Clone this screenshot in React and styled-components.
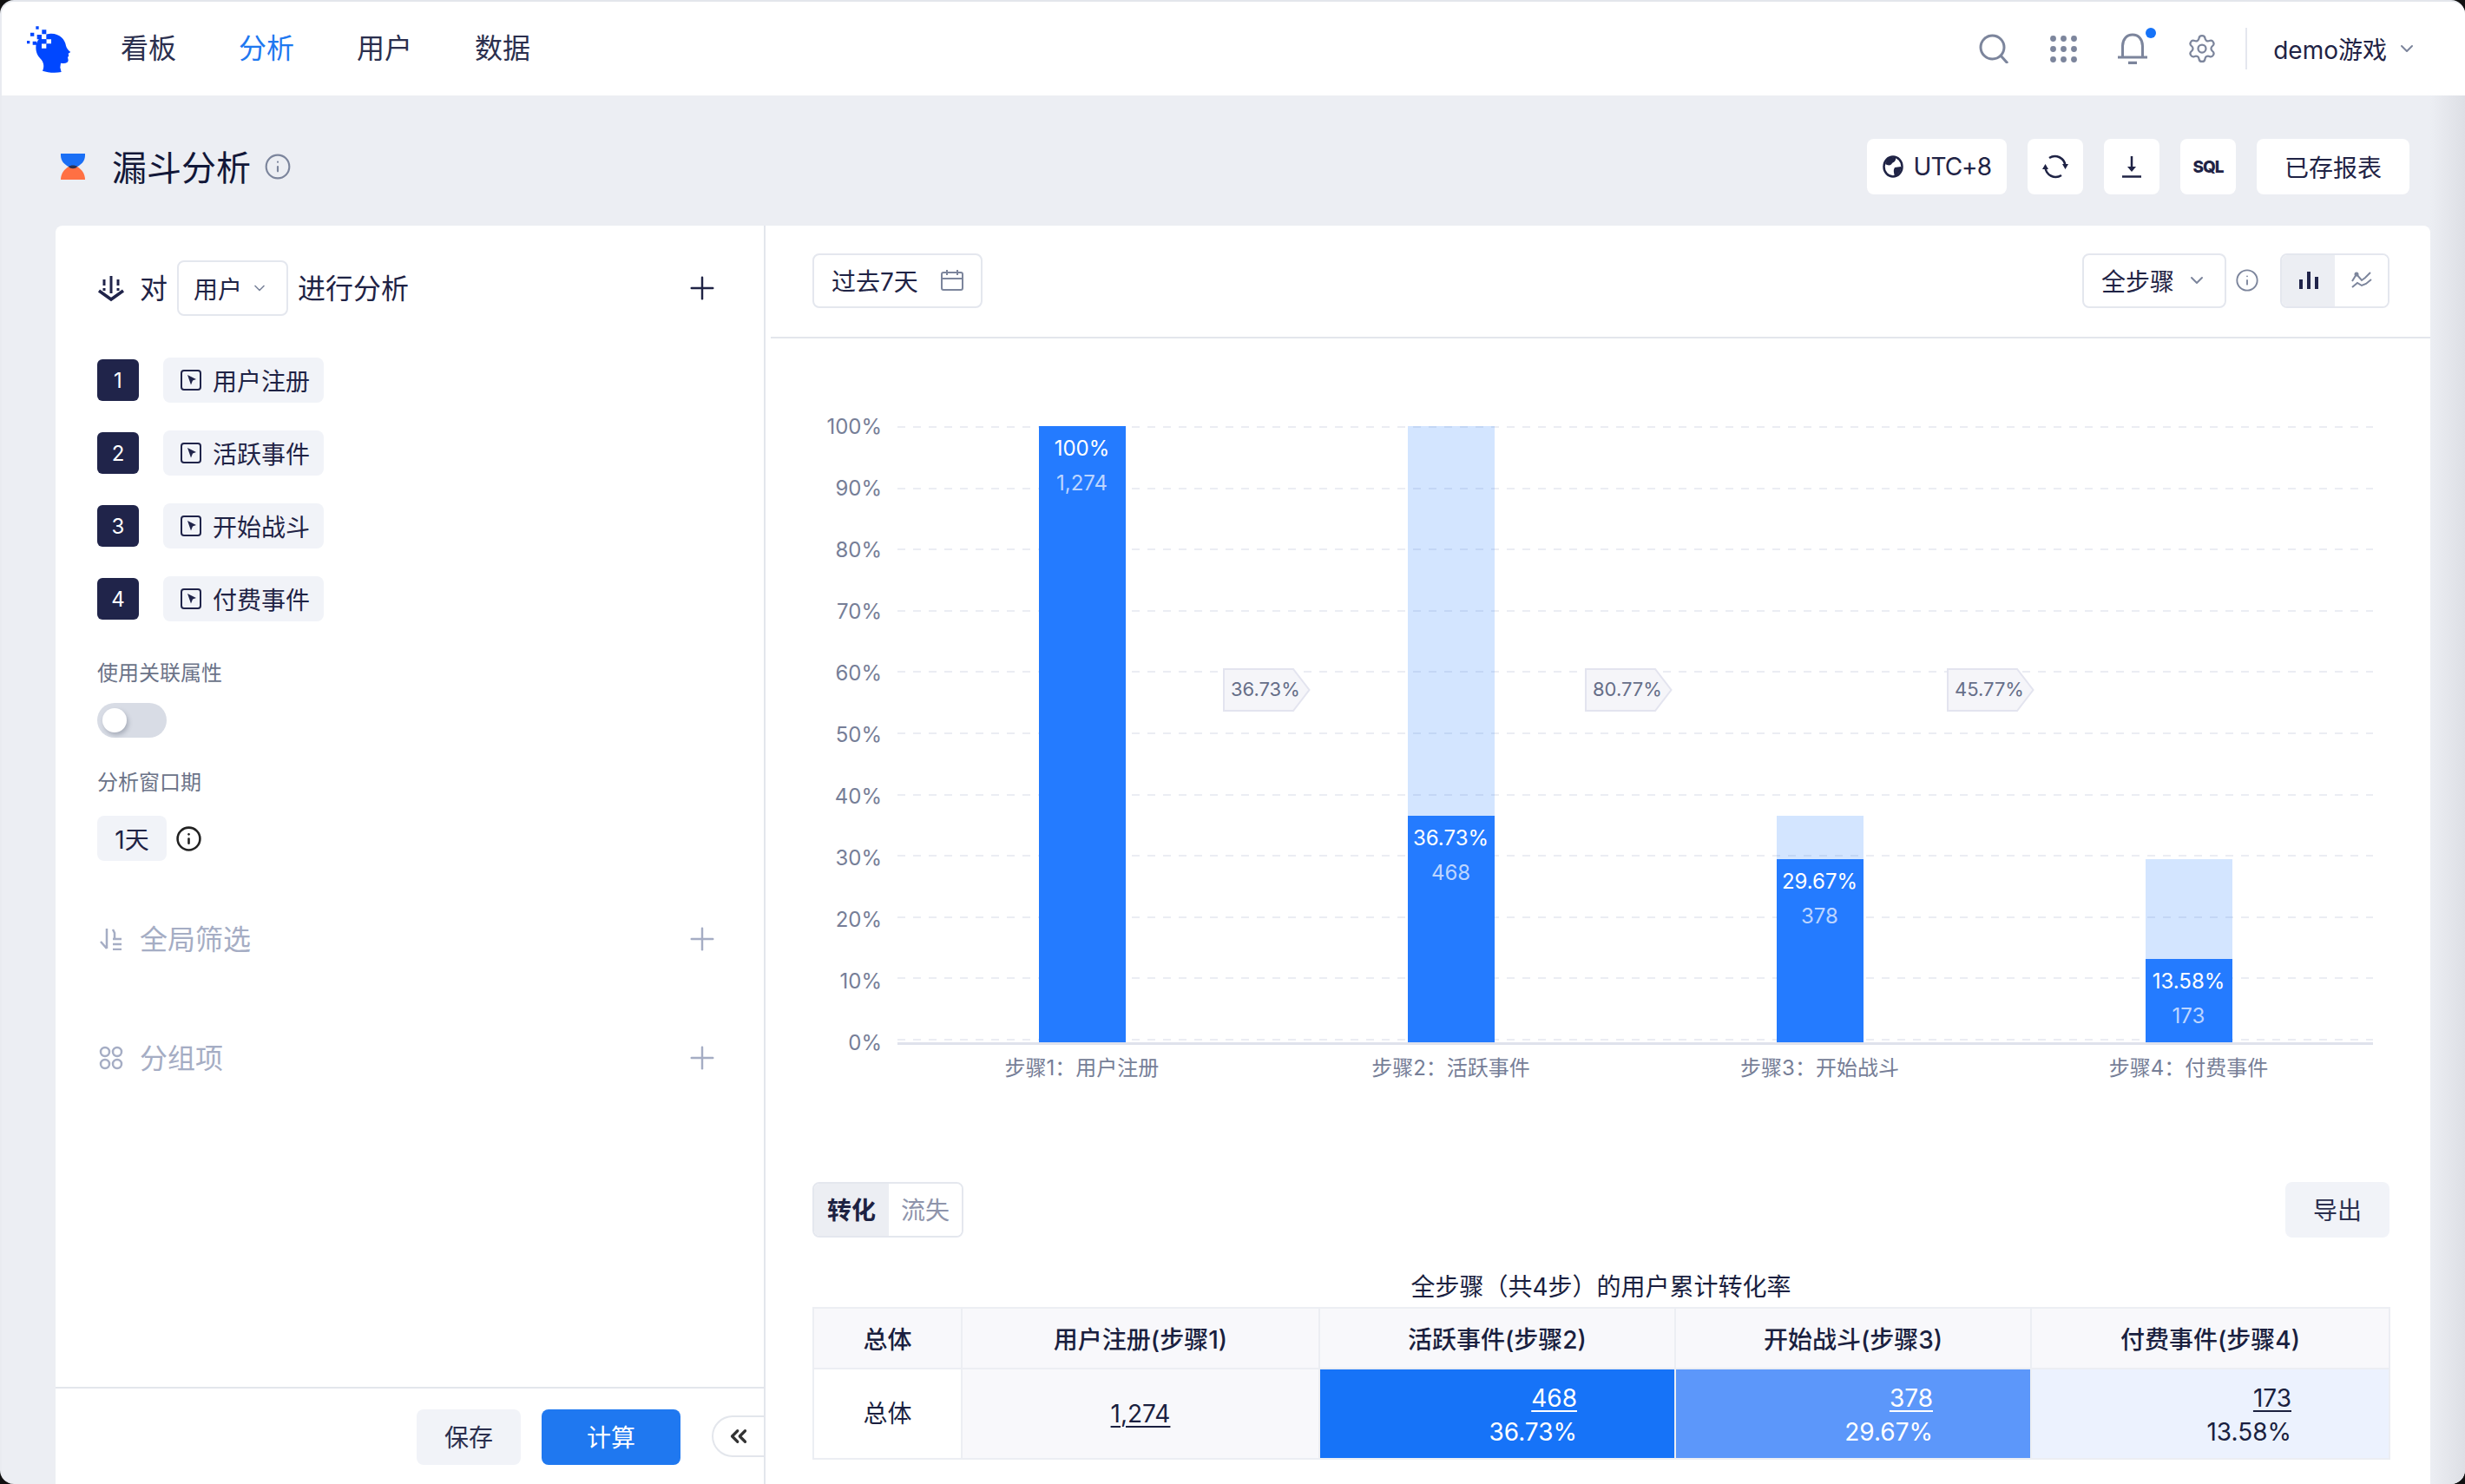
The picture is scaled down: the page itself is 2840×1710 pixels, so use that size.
import styled, { createGlobalStyle } from "styled-components";
import { ChevronDown, ChevronsLeft, Info, Plus, Settings } from "lucide-react";

const GlobalStyle = createGlobalStyle`
    html, body {
        margin: 0;
        background: #111;
    }
    * {
        box-sizing: border-box;
    }
    body {
        font-family: Inter, "Noto Sans CJK SC", sans-serif;
        color: #1f2345;
    }
`;

const Shell = styled.div`
    position: relative;
    width: 2840px;
    height: 1710px;
    display: flex;
    flex-direction: column;
    overflow: hidden;
    border-radius: 16px;
    border-top: 2px solid #e3e6ec;
    border-left: 2px solid #e9ebf0;
    background: #eceef3;

    /* window shadow on the right edge */
    &::after {
        content: "";
        position: absolute;
        top: 108px;
        right: 0;
        bottom: 0;
        width: 40px;
        background: linear-gradient(90deg, #eceef3, #dddfe5);
    }
`;

// top bar
const TopBar = styled.header`
    height: 108px;
    flex: none;
    display: flex;
    align-items: center;
    padding: 0 55px 0 18px;
    background: #fff;
`;

const Logo = styled.svg`
    width: 90px;
    height: 70px;
    flex: none;
`;

const Nav = styled.nav`
    display: flex;
    gap: 72px;
    margin-left: 29px;
    flex: 1;
`;

const NavItem = styled.a`
    font-size: 32px;
    line-height: 44px;
    color: ${(p) => (p.$active ? "#1f78f0" : "#2b2f4e")};
`;

const TopIcons = styled.div`
    display: flex;
    align-items: center;
    color: #7c859c;
`;

const TopIcon = styled.span`
    position: relative;
    display: flex;
    width: 36px;
    justify-content: center;
    margin-right: 44px;
`;

const BellDot = styled.i`
    position: absolute;
    top: -6px;
    right: -9px;
    width: 12px;
    height: 12px;
    border-radius: 50%;
    background: #1673f8;
`;

const TopDivider = styled.span`
    width: 2px;
    height: 48px;
    margin-left: -12px;
    background: #e4e7ee;
`;

const UserMenu = styled.div`
    display: flex;
    align-items: center;
    gap: 11px;
    margin-left: 30px;
    font-size: 28px;
    color: #1f2345;
    svg {
        color: #7c859c;
    }
`;

// page title row
const TitleRow = styled.div`
    height: 150px;
    flex: none;
    display: flex;
    justify-content: space-between;
    padding: 50px 64px 0 68px;
`;

const Title = styled.div`
    display: flex;
    align-items: center;
    height: 64px;
    color: #7c859c;
`;

const TitleText = styled.h1`
    margin: 0 15px 0 31px;
    font-size: 40px;
    font-weight: 400;
    line-height: 64px;
    padding-top: 4px;
    color: #121738;
`;

const Actions = styled.div`
    display: flex;
    gap: 24px;
`;

const ActionButton = styled.button`
    display: flex;
    align-items: center;
    justify-content: center;
    gap: ${(p) => (p.$text ? "12px" : "8px")};
    height: 64px;
    min-width: 64px;
    padding: ${(p) => (p.$wide ? "0 32px" : p.$text ? "0 18px" : "0")};
    border: 0;
    border-radius: 8px;
    background: #fff;
    font: inherit;
    font-size: 28px;
    letter-spacing: ${(p) => (p.$text ? "-1px" : 0)};
    color: #1f2345;
`;

const SqlText = styled.span`
    font-size: 19px;
    font-weight: 800;
    letter-spacing: -1px;
`;

// panel
const Panel = styled.main`
    flex: 1;
    display: flex;
    min-height: 0;
    margin: 0 40px 0 62px;
    border-radius: 8px 8px 0 0;
    background: #fff;
    overflow: hidden;
    position: relative;
    z-index: 1;
`;

const Sidebar = styled.aside`
    position: relative;
    width: 818px;
    flex: none;
    display: flex;
    flex-direction: column;
    border-right: 2px solid #e3e6ec;
`;

const SidebarBody = styled.div`
    flex: 1;
    padding: 40px 50px 0 48px;
`;

const SectionHead = styled.div`
    display: flex;
    align-items: center;
    height: ${(p) => (p.$main ? "64px" : "40px")};
    margin-top: ${(p) => p.$top || 0}px;
    font-size: 32px;
    color: ${(p) => (p.$muted ? "#a5adc4" : "#1f2345")};
`;

const HeadIcon = styled.span`
    display: flex;
    width: 32px;
    margin-right: 17px;
    padding-left: ${(p) => p.$inset || 0}px;
`;

const HeadWord = styled.span`
    flex: ${(p) => (p.$grow ? 1 : "none")};
    margin-left: ${(p) => p.$left || 0}px;
    padding-bottom: 4px;
`;

const SmallSelect = styled.div`
    display: flex;
    align-items: center;
    width: 128px;
    height: 64px;
    margin-left: 11px;
    padding-left: 17px;
    gap: 10px;
    border: 2px solid #e4e7ee;
    border-radius: 8px;
    font-size: 28px;
    svg {
        color: #7c859c;
    }
`;

const Steps = styled.div`
    display: flex;
    flex-direction: column;
    gap: 32px;
    margin-top: 48px;
`;

const StepRow = styled.div`
    display: flex;
    align-items: center;
    gap: 28px;
`;

const StepNo = styled.span`
    display: flex;
    align-items: center;
    justify-content: center;
    width: 48px;
    height: 48px;
    border-radius: 6px;
    background: #20244a;
    color: #fff;
    font-size: 24px;
`;

const StepTag = styled.span`
    display: flex;
    align-items: center;
    gap: 13px;
    width: 185px;
    height: 52px;
    padding-left: 20px;
    border-radius: 8px;
    background: #f1f3f8;
    font-size: 28px;
`;

const FieldLabel = styled.div`
    margin-top: ${(p) => p.$top}px;
    font-size: 24px;
    line-height: 32px;
    color: #6b7388;
`;

const Toggle = styled.div`
    display: flex;
    align-items: center;
    width: 80px;
    height: 40px;
    margin-top: 18px;
    padding-left: 6px;
    border-radius: 20px;
    background: #d8dce5;
`;

const Knob = styled.i`
    width: 28px;
    height: 28px;
    border-radius: 50%;
    background: #fff;
    box-shadow: 2px 3px 5px rgba(60, 70, 90, 0.3);
`;

const WindowRow = styled.div`
    display: flex;
    align-items: center;
    gap: 10px;
    margin-top: 22px;
`;

const WindowValue = styled.span`
    display: flex;
    align-items: center;
    justify-content: center;
    width: 80px;
    height: 52px;
    border-radius: 8px;
    background: #f1f3f8;
    font-size: 28px;
`;

const SidebarFooter = styled.footer`
    flex: none;
    display: flex;
    justify-content: flex-end;
    gap: 24px;
    height: 112px;
    padding: 24px 96px 0 0;
    border-top: 2px solid #e3e6ec;
`;

const FooterButton = styled.button`
    width: ${(p) => (p.$primary ? "160px" : "120px")};
    height: 64px;
    padding: 0 0 2px;
    border: 0;
    border-radius: 8px;
    background: ${(p) => (p.$primary ? "#1f78f0" : "#f1f3f8")};
    color: ${(p) => (p.$primary ? "#fff" : "#2b2f4e")};
    font: inherit;
    font-size: 28px;
`;

const Collapse = styled.span`
    position: absolute;
    right: 0;
    bottom: 31px;
    display: flex;
    align-items: center;
    justify-content: center;
    width: 60px;
    height: 48px;
    border: 2px solid #e3e6ec;
    border-right: 0;
    border-radius: 24px 0 0 24px;
    background: #fff;
    color: #333;
`;

// right side
const Content = styled.section`
    flex: 1;
    min-width: 0;
    padding-left: 6px;
`;

const ContentBar = styled.div`
    display: flex;
    align-items: center;
    justify-content: space-between;
    height: 130px;
    padding: 0 47px 2px 48px;
    border-bottom: 2px solid #e3e6ec;
`;

const BarGroup = styled.div`
    display: flex;
    align-items: center;
`;

const Picker = styled.div`
    display: flex;
    align-items: center;
    justify-content: space-between;
    width: ${(p) => p.$width}px;
    height: 63px;
    padding: 0 ${(p) => p.$right}px 0 20px;
    border: 2px solid #e4e7ee;
    border-radius: 8px;
    font-size: 28px;
    color: #1f2345;
    svg {
        color: #7c859c;
    }
`;

const BarInfo = styled.span`
    display: flex;
    margin: 0 24px 0 10px;
    color: #7c859c;
`;

const Switcher = styled.div`
    display: flex;
    height: 63px;
    border: 2px solid #e4e7ee;
    border-radius: 8px;
    overflow: hidden;
`;

const SwitchItem = styled.span`
    display: flex;
    align-items: center;
    justify-content: center;
    width: ${(p) => p.$width || 61}px;
    padding-bottom: ${(p) => (p.$width ? "2px" : 0)};
    background: ${(p) => (p.$on ? "#eceef3" : "#fff")};
    color: ${(p) => (p.$on ? "#1d2242" : "#8e94ab")};
    font-size: 28px;
    font-weight: ${(p) => (p.$on && p.$width ? 700 : 400)};
`;

const Chart = styled.div`
    display: flex;
    gap: 18px;
    padding: 101px 66px 0 48px;
`;

const YAxis = styled.div`
    width: 80px;
    height: 710px;
    flex: none;
    display: flex;
    flex-direction: column;
    justify-content: space-between;
    align-items: flex-end;
`;

const Tick = styled.span`
    height: 0;
    display: flex;
    align-items: center;
    font-size: 24px;
    color: #767e97;
`;

const PlotWrap = styled.div`
    flex: 1;
    min-width: 0;
`;

const Plot = styled.div`
    position: relative;
    display: grid;
    grid-template-columns: repeat(4, 1fr);
    height: 713px;
    border-bottom: 3px solid #dfe2ec;
`;

const GridLines = styled.div`
    position: absolute;
    inset: 0 0 2px;
    display: flex;
    flex-direction: column;
    justify-content: space-between;
`;

const GridLine = styled.i`
    height: 2px;
    background: repeating-linear-gradient(90deg, #ebedf3 0 9px, transparent 9px 18px);
`;

const Column = styled.div`
    position: relative;
    display: flex;
    flex-direction: column;
    align-items: center;
    justify-content: flex-end;
`;

const BarGhost = styled.div`
    width: 100px;
    background: rgba(36, 123, 255, 0.2);
`;

const BarFill = styled.div`
    width: 100px;
    padding-top: 6px;
    background: #247bff;
    text-align: center;
    line-height: 40px;
`;

const BarRate = styled.div`
    font-size: 24px;
    color: #fff;
`;

const BarCount = styled.div`
    font-size: 24px;
    color: #bcd5ff;
`;

const FlowTag = styled.div`
    position: absolute;
    top: 279px;
    left: ${(p) => p.$left}px;
    width: 101px;
    height: 50px;
    padding-left: 9px;
    font-size: 22px;
    line-height: 49px;
    color: #666e88;
    svg {
        position: absolute;
        inset: 0;
    }
    span {
        position: relative;
    }
`;

const XAxis = styled.div`
    display: grid;
    grid-template-columns: repeat(4, 1fr);
    height: 48px;
    align-items: center;
    text-align: center;
    font-size: 24px;
    color: #767e97;
`;

const TableSection = styled.div`
    padding: 110px 47px 0 48px;
`;

const TableTools = styled.div`
    display: flex;
    justify-content: space-between;
`;

const TabGroup = styled(Switcher)`
    height: 64px;
`;

const ExportButton = styled.button`
    width: 120px;
    height: 64px;
    padding: 0 0 2px;
    border: 0;
    border-radius: 8px;
    background: #f1f3f8;
    color: #2b2f4e;
    font: inherit;
    font-size: 28px;
`;

const TableTitle = styled.div`
    margin-top: 37px;
    font-size: 28px;
    line-height: 40px;
    text-align: center;
    color: #1a1f3f;
`;

const Table = styled.table`
    width: 100%;
    margin-top: 3px;
    table-layout: fixed;
    border-collapse: collapse;
    border: 2px solid #eceef3;
    font-size: 28px;
    color: #1a1f3f;
`;

const HeadCell = styled.th`
    height: 70px;
    border: 2px solid #eceef3;
    background: #f8f8fb;
    font-weight: 500;
`;

const Cell = styled.td`
    height: 104px;
    padding: ${(p) => (p.$steps ? "3px 112px 0 0" : 0)};
    border: 2px solid #eceef3;
    background: ${(p) => p.$bg || "#fff"};
    color: ${(p) => (p.$light ? "#fff" : "#1a1f3f")};
    text-align: ${(p) => (p.$steps ? "right" : "center")};
    line-height: 39px;
`;

const CellLink = styled.u`
    text-underline-offset: 4px;
    text-decoration-thickness: 2px;
`;

function LogoMark() {
    return (
        <Logo viewBox="0 0 270 210">
            <path
                fill="#0047ff"
                d="M64 100C64 75 85 55 115 53C145 52 165 72 168 95C170 105 178 112 184 117L176 122L178 130L174 135L176 145C176 155 165 158 150 155L148 170L152 186C130 190 105 188 87 182C95 165 90 150 80 140C70 130 64 118 64 100Z"
            />
            <path
                fill="#fff"
                d="M84 57h16v16H84zM100 73h17v15h-17zM84 88h16v16H84z"
            />
            <path
                fill="#0047ff"
                d="M85 40h15v15H85zM68 57h16v16H68zM45 50h13v12H45zM64 28h10v10H64zM33 78h10v10H33zM53 80h13v12H53zM84 73h16v15H84z"
            />
        </Logo>
    );
}

function FunnelIcon() {
    return (
        <svg width="28" height="30" viewBox="0 0 28 30">
            <path fill="#1a6ff5" d="M0 0H28V2C28 9 23 13 19 15H9C5 13 0 9 0 2Z" />
            <path fill="#ff7043" d="M9 15H19C24 18 28 23 28 30H0C0 23 4 18 9 15Z" />
            <path fill="#2b3050" d="M9 15C11 13 17 13 19 15C17 18 11 18 9 15Z" />
        </svg>
    );
}

function SearchIcon() {
    return (
        <svg width="34" height="34" viewBox="0 0 34 34" fill="none" stroke="currentColor" strokeWidth="3">
            <circle cx="15.5" cy="15.5" r="13.5" />
            <path d="M25 25l8 9" />
        </svg>
    );
}

function AppsIcon() {
    const dots = [3.5, 15.5, 27.5];
    return (
        <svg width="31" height="31" viewBox="0 0 31 31" fill="currentColor">
            {dots.map((y) => dots.map((x) => <circle key={`${x}-${y}`} cx={x} cy={y} r="3.4" />))}
        </svg>
    );
}

function BellIcon() {
    return (
        <svg width="34" height="36" viewBox="0 0 34 36" fill="none" stroke="currentColor" strokeWidth="3">
            <path d="M5.500 27V15C5.500 7.500 10 2 17 2s11.500 5.500 11.500 13v12" />
            <path d="M0 28h34" />
            <path d="M12 34.500h10" strokeWidth="3.500" />
        </svg>
    );
}

function GlobeIcon() {
    return (
        <svg width="24" height="26" viewBox="0 0 24 26">
            <ellipse cx="12" cy="13" rx="10.500" ry="11.500" fill="none" stroke="currentColor" strokeWidth="2.500" />
            <path fill="currentColor" d="M6 3L15 2C16 6 13 8 11 9C10 12 6 12 3 10ZM14 14L21 13C22 18 18 22 14 24C13 20 12 17 14 14Z" />
        </svg>
    );
}

function RefreshIcon() {
    return (
        <svg width="30" height="30" viewBox="0 0 30 30" fill="none" stroke="currentColor" strokeWidth="2.600">
            <path d="M26.500 14A12 12 0 0 0 8 5" />
            <path d="M3.500 16A12 12 0 0 0 22 25" />
            <path fill="currentColor" stroke="none" d="M23 12h7l-3.500 6zM0 18h7l-3.500-6z" />
        </svg>
    );
}

function DownloadIcon() {
    return (
        <svg width="24" height="26" viewBox="0 0 24 26" fill="none" stroke="currentColor" strokeWidth="2.500">
            <path d="M12 1v16" />
            <path d="M12 19l-5-6h10z" fill="currentColor" stroke="none" />
            <path d="M1 24.500h22" />
        </svg>
    );
}

function AnalyseIcon() {
    return (
        <svg width="32" height="32" viewBox="0 0 32 32" fill="none" stroke="#20244a" strokeWidth="3">
            <path d="M2 19l14 10 14-10" strokeWidth="3.500" />
            <path d="M16 2v20" />
            <path d="M8 6v7M24 6v7" />
            <path d="M8 16v3M24 16v3" />
        </svg>
    );
}

function EventIcon() {
    return (
        <svg width="24" height="24" viewBox="0 0 24 24" fill="none">
            <rect x="1" y="1" width="22" height="22" rx="3" stroke="#20244a" strokeWidth="2" />
            <path fill="#20244a" d="M8 6l10 5-4 1.500-2 5z" />
        </svg>
    );
}

function FilterIcon() {
    return (
        <svg width="26" height="26" viewBox="0 0 26 26" fill="none" stroke="#a5adc4" strokeWidth="2.500">
            <path d="M8 1v23M1 16l7 8" />
            <path d="M15 2l2 4v6M15 13h10M15 19h10M15 25h10" />
        </svg>
    );
}

function GroupIcon() {
    return (
        <svg width="28" height="28" viewBox="0 0 28 28" fill="none" stroke="#a5adc4" strokeWidth="2.500">
            <circle cx="7" cy="7" r="5" />
            <circle cx="21" cy="7" r="5" />
            <circle cx="7" cy="21" r="5" />
            <circle cx="21" cy="21" r="5" />
        </svg>
    );
}

function CalendarIcon() {
    return (
        <svg width="26" height="24" viewBox="0 0 26 24" fill="none" stroke="#7c859c" strokeWidth="2">
            <rect x="1" y="3" width="24" height="20" rx="2" />
            <path d="M1 10h24M7 0v6M19 0v6" />
        </svg>
    );
}

function BarsIcon() {
    return (
        <svg width="22" height="20" viewBox="0 0 22 20" fill="#20244a">
            <rect x="0" y="9" width="4" height="11" />
            <rect x="9" y="0" width="4" height="20" />
            <rect x="18" y="6" width="4" height="14" />
        </svg>
    );
}

function LinesIcon() {
    return (
        <svg width="24" height="20" viewBox="0 0 24 20" fill="none" stroke="#7c859c" strokeWidth="2">
            <path d="M1 11L6 3l6 7 4-3 6-6" />
            <path d="M1 18l6-5 5 3 5-2 6-5" />
            <circle cx="6" cy="3" r="2.500" fill="#7c859c" stroke="none" />
        </svg>
    );
}

function FlowShape() {
    return (
        <svg width="101" height="50" viewBox="0 0 101 50">
            <path d="M1 1H81L99.500 25L81 49H1Z" fill="#f5f5f9" stroke="#e3e4ef" strokeWidth="2" />
        </svg>
    );
}

const navItems = ["看板", "分析", "用户", "数据"];
const steps = ["用户注册", "活跃事件", "开始战斗", "付费事件"];
const ticks = ["100%", "90%", "80%", "70%", "60%", "50%", "40%", "30%", "20%", "10%", "0%"];

const bars = [
    { label: "步骤1：用户注册", prev: 100, pct: 100, rate: "100%", count: "1,274" },
    { label: "步骤2：活跃事件", prev: 100, pct: 36.73, rate: "36.73%", count: "468" },
    { label: "步骤3：开始战斗", prev: 36.73, pct: 29.67, rate: "29.67%", count: "378" },
    { label: "步骤4：付费事件", prev: 29.67, pct: 13.58, rate: "13.58%", count: "173" },
];

const flows = [
    { left: 375, rate: "36.73%" },
    { left: 792, rate: "80.77%" },
    { left: 1209, rate: "45.77%" },
];

const PLOT_HEIGHT = 710;

function App() {
    return (
        <>
            <GlobalStyle />
            <Shell>
                <TopBar>
                    <LogoMark />
                    <Nav>
                        {navItems.map((item) => (
                            <NavItem key={item} $active={item === "分析"}>
                                {item}
                            </NavItem>
                        ))}
                    </Nav>
                    <TopIcons>
                        <TopIcon>
                            <SearchIcon />
                        </TopIcon>
                        <TopIcon>
                            <AppsIcon />
                        </TopIcon>
                        <TopIcon>
                            <BellIcon />
                            <BellDot />
                        </TopIcon>
                        <TopIcon>
                            <Settings size={40} strokeWidth={1.5} />
                        </TopIcon>
                        <TopDivider />
                    </TopIcons>
                    <UserMenu>
                        demo游戏
                        <ChevronDown size={24} strokeWidth={2} />
                    </UserMenu>
                </TopBar>

                <TitleRow>
                    <Title>
                        <FunnelIcon />
                        <TitleText>漏斗分析</TitleText>
                        <Info size={32} strokeWidth={1.6} />
                    </Title>
                    <Actions>
                        <ActionButton $text>
                            <GlobeIcon />
                            UTC+8
                        </ActionButton>
                        <ActionButton>
                            <RefreshIcon />
                        </ActionButton>
                        <ActionButton>
                            <DownloadIcon />
                        </ActionButton>
                        <ActionButton>
                            <SqlText>SQL</SqlText>
                        </ActionButton>
                        <ActionButton $wide>已存报表</ActionButton>
                    </Actions>
                </TitleRow>

                <Panel>
                    <Sidebar>
                        <SidebarBody>
                            <SectionHead $main>
                                <HeadIcon>
                                    <AnalyseIcon />
                                </HeadIcon>
                                <HeadWord>对</HeadWord>
                                <SmallSelect>
                                    用户
                                    <ChevronDown size={20} strokeWidth={2} />
                                </SmallSelect>
                                <HeadWord $grow $left={11}>
                                    进行分析
                                </HeadWord>
                                <Plus size={42} strokeWidth={1.4} />
                            </SectionHead>

                            <Steps>
                                {steps.map((step, i) => (
                                    <StepRow key={step}>
                                        <StepNo>{i + 1}</StepNo>
                                        <StepTag>
                                            <EventIcon />
                                            {step}
                                        </StepTag>
                                    </StepRow>
                                ))}
                            </Steps>

                            <FieldLabel $top={44}>使用关联属性</FieldLabel>
                            <Toggle>
                                <Knob />
                            </Toggle>

                            <FieldLabel $top={36}>分析窗口期</FieldLabel>
                            <WindowRow>
                                <WindowValue>1天</WindowValue>
                                <Info size={31} strokeWidth={2} color="#222" />
                            </WindowRow>

                            <SectionHead $muted $top={70}>
                                <HeadIcon $inset={3}>
                                    <FilterIcon />
                                </HeadIcon>
                                <HeadWord $grow>全局筛选</HeadWord>
                                <Plus size={42} strokeWidth={1.4} />
                            </SectionHead>
                            <SectionHead $muted $top={97}>
                                <HeadIcon $inset={2}>
                                    <GroupIcon />
                                </HeadIcon>
                                <HeadWord $grow>分组项</HeadWord>
                                <Plus size={42} strokeWidth={1.4} />
                            </SectionHead>
                        </SidebarBody>

                        <SidebarFooter>
                            <FooterButton>保存</FooterButton>
                            <FooterButton $primary>计算</FooterButton>
                        </SidebarFooter>
                        <Collapse>
                            <ChevronsLeft size={30} strokeWidth={2.6} />
                        </Collapse>
                    </Sidebar>

                    <Content>
                        <ContentBar>
                            <Picker $width={196} $right={20}>
                                过去7天
                                <CalendarIcon />
                            </Picker>
                            <BarGroup>
                                <Picker $width={166} $right={20}>
                                    全步骤
                                    <ChevronDown size={24} strokeWidth={2} />
                                </Picker>
                                <BarInfo>
                                    <Info size={28} strokeWidth={1.6} />
                                </BarInfo>
                                <Switcher>
                                    <SwitchItem $on>
                                        <BarsIcon />
                                    </SwitchItem>
                                    <SwitchItem>
                                        <LinesIcon />
                                    </SwitchItem>
                                </Switcher>
                            </BarGroup>
                        </ContentBar>

                        <Chart>
                            <YAxis>
                                {ticks.map((tick) => (
                                    <Tick key={tick}>{tick}</Tick>
                                ))}
                            </YAxis>
                            <PlotWrap>
                                <Plot>
                                    <GridLines>
                                        {ticks.map((tick) => (
                                            <GridLine key={tick} />
                                        ))}
                                    </GridLines>
                                    {bars.map((bar) => (
                                        <Column key={bar.label}>
                                            <BarGhost style={{ height: ((bar.prev - bar.pct) / 100) * PLOT_HEIGHT }} />
                                            <BarFill style={{ height: (bar.pct / 100) * PLOT_HEIGHT }}>
                                                <BarRate>{bar.rate}</BarRate>
                                                <BarCount>{bar.count}</BarCount>
                                            </BarFill>
                                        </Column>
                                    ))}
                                    {flows.map((flow) => (
                                        <FlowTag key={flow.left} $left={flow.left}>
                                            <FlowShape />
                                            <span>{flow.rate}</span>
                                        </FlowTag>
                                    ))}
                                </Plot>
                                <XAxis>
                                    {bars.map((bar) => (
                                        <span key={bar.label}>{bar.label}</span>
                                    ))}
                                </XAxis>
                            </PlotWrap>
                        </Chart>

                        <TableSection>
                            <TableTools>
                                <TabGroup>
                                    <SwitchItem $on $width={86}>
                                        转化
                                    </SwitchItem>
                                    <SwitchItem $width={84}>流失</SwitchItem>
                                </TabGroup>
                                <ExportButton>导出</ExportButton>
                            </TableTools>
                            <TableTitle>全步骤（共4步）的用户累计转化率</TableTitle>
                            <Table>
                                <colgroup>
                                    <col width="171" />
                                    <col width="412" />
                                    <col width="410" />
                                    <col width="410" />
                                    <col width="413" />
                                </colgroup>
                                <thead>
                                    <tr>
                                        <HeadCell>总体</HeadCell>
                                        <HeadCell>用户注册(步骤1)</HeadCell>
                                        <HeadCell>活跃事件(步骤2)</HeadCell>
                                        <HeadCell>开始战斗(步骤3)</HeadCell>
                                        <HeadCell>付费事件(步骤4)</HeadCell>
                                    </tr>
                                </thead>
                                <tbody>
                                    <tr>
                                        <Cell>总体</Cell>
                                        <Cell $bg="#f8f8fb">
                                            <CellLink>1,274</CellLink>
                                        </Cell>
                                        <Cell $steps $light $bg="#1673f8">
                                            <CellLink>468</CellLink>
                                            <br />
                                            36.73%
                                        </Cell>
                                        <Cell $steps $light $bg="#5c97fa">
                                            <CellLink>378</CellLink>
                                            <br />
                                            29.67%
                                        </Cell>
                                        <Cell $steps $bg="#ecf2fe">
                                            <CellLink>173</CellLink>
                                            <br />
                                            13.58%
                                        </Cell>
                                    </tr>
                                </tbody>
                            </Table>
                        </TableSection>
                    </Content>
                </Panel>
            </Shell>
        </>
    );
}

export default App;
